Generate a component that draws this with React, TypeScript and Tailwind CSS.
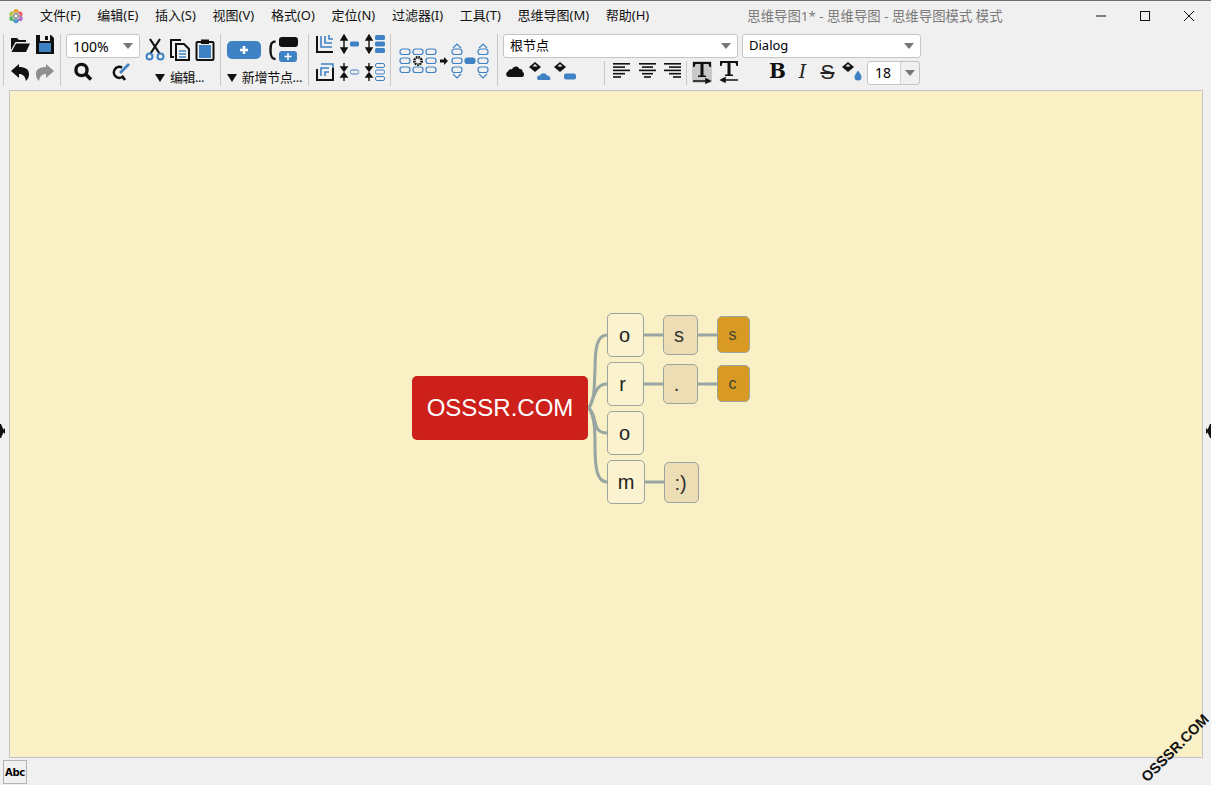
import type { ReactNode } from 'react';

const BLUE = '#3f82c4';
const UI_FONT = "font-['Noto_Sans','Noto_Sans_CJK_SC',sans-serif]";

const menus = ['文件(F)', '编辑(E)', '插入(S)', '视图(V)', '格式(O)', '定位(N)', '过滤器(I)', '工具(T)', '思维导图(M)', '帮助(H)'];

const nodes = [
  { label: 'o', box: 'left-[596px] top-[221px] w-[37px] h-[44px] bg-[#fbf3d0] text-[20px] text-[#222] pr-[2px]' },
  { label: 'r', box: 'left-[596px] top-[270px] w-[37px] h-[44px] bg-[#fbf3d0] text-[20px] text-[#222] pr-[6px]' },
  { label: 'o', box: 'left-[596px] top-[319px] w-[37px] h-[44px] bg-[#fbf3d0] text-[20px] text-[#222] pr-[2px]' },
  { label: 'm', box: 'left-[596px] top-[368px] w-[38px] h-[44px] bg-[#fbf3d0] text-[20px] text-[#222]' },
  { label: 's', box: 'left-[652px] top-[223px] w-[35px] h-[40px] bg-[#ecddb5] text-[20px] text-[#333] pr-[3px]' },
  { label: '.', box: 'left-[652px] top-[272px] w-[35px] h-[40px] bg-[#ecddb5] text-[20px] text-[#333] pr-[8px]' },
  { label: ':)', box: 'left-[653px] top-[370px] w-[35px] h-[41px] bg-[#ecddb5] text-[20px] text-[#333] pr-[2px]' },
  { label: 's', box: 'left-[706px] top-[224px] w-[33px] h-[37px] bg-[#d89a22] text-[16px] text-[#443] pr-[2px]' },
  { label: 'c', box: 'left-[706px] top-[273px] w-[33px] h-[37px] bg-[#d89a22] text-[16px] text-[#443] pr-[2px]' },
];

function Cell({ children }: { children: ReactNode }) {
  return <div className="w-[25px] h-[28px] flex items-center justify-center">{children}</div>;
}

function Sep({ className = 'mt-1 h-[52px]' }: { className?: string }) {
  return <div className={`w-px shrink-0 bg-[#c8c8c8] ${className}`} />;
}

function Ico({ children, w = 24, h = 24 }: { children: ReactNode; w?: number; h?: number }) {
  return (
    <svg width={w} height={h} viewBox={`0 0 ${w} ${h}`} className="shrink-0">
      {children}
    </svg>
  );
}

function Caret() {
  return (
    <svg width="10" height="6" viewBox="0 0 10 6">
      <path d="M0 0h10L5 6z" fill="#777" />
    </svg>
  );
}

function DownMark() {
  return (
    <svg width="10" height="8" viewBox="0 0 10 8" className="shrink-0">
      <path d="M0 0h10L5 8z" fill="#111" />
    </svg>
  );
}

function ArrowsOut() {
  return <path d="M6 6v12M3 8l3-5 3 5zM3 16l3 5 3-5z" fill="#111" stroke="#111" strokeWidth="1.400" />;
}

function ArrowsIn() {
  return <path d="M6 3v5M3 7l3 4 3-4zM6 21v-5M3 17l3-4 3 4z" fill="#111" stroke="#111" strokeWidth="1.400" />;
}

function TreeBox({ x, y, solid }: { x: number; y: number; solid?: boolean }) {
  return <rect x={x} y={y} width="10" height="5.5" rx="2.5" fill={solid ? BLUE : 'none'} stroke={BLUE} strokeWidth="1.2" />;
}

function TextAlign({ lines }: { lines: [number, number][] }) {
  return (
    <Ico>
      {lines.map(([x, w], i) => (
        <rect key={i} x={x} y={4 + i * 3.3} width={w} height="1.6" fill="#111" />
      ))}
    </Ico>
  );
}

function ComboBox({ text, className }: { text: string; className: string }) {
  return (
    <div className={`h-[24px] rounded-[3px] border border-[#c4c4c4] bg-white flex items-center justify-between pl-[6px] pr-[6px] text-black ${className}`}>
      <span>{text}</span>
      <Caret />
    </div>
  );
}

function FillIcon({ children }: { children: ReactNode }) {
  return (
    <Ico>
      <path d="M7 3l6 5-6 5-6-5z" fill="#111" />
      <path d="M4.5 7.500h5L7 5z" fill="#f0f0f0" />
      {children}
    </Ico>
  );
}

export default function App() {
  return (
    <div className={`relative w-[1211px] h-[785px] overflow-hidden flex flex-col bg-[#f0f0f0] ${UI_FONT}`}>
      {/* title bar */}
      <div className="h-[30px] shrink-0 border-t border-[#6e6e6e] pt-px flex items-center text-[13px]">
        <div className="w-[32px] flex justify-center">
          <svg width="16" height="16" viewBox="0 0 16 16">
            <circle cx="8" cy="3.6" r="2.6" fill="#e9a23b" />
            <circle cx="12" cy="6" r="2.6" fill="#e0656e" />
            <circle cx="12" cy="10.4" r="2.6" fill="#b06ac0" />
            <circle cx="8" cy="12.6" r="2.6" fill="#4f8fd0" />
            <circle cx="4" cy="10.4" r="2.6" fill="#57b46d" />
            <circle cx="4" cy="6" r="2.6" fill="#b7c24a" />
            <circle cx="8" cy="8" r="3.6" fill="#f0f0f0" />
            <circle cx="8" cy="8" r="2.4" fill="none" stroke="#555" strokeWidth="1" />
          </svg>
        </div>
        <div className="flex gap-[0.7px] text-[#111]">
          {menus.map((m) => (
            <span key={m} className="px-2 whitespace-nowrap">{m}</span>
          ))}
        </div>
        <span className="ml-[90px] text-[13.400px] text-[#7a7a7a] whitespace-nowrap">思维导图1* - 思维导图 - 思维导图模式 模式</span>
        <div className="ml-auto flex items-center h-full">
          <div className="w-[44px] flex justify-center">
            <svg width="10" height="10" viewBox="0 0 10 10"><path d="M0 5h10" stroke="#111" /></svg>
          </div>
          <div className="w-[44px] flex justify-center">
            <svg width="10" height="10" viewBox="0 0 10 10"><rect x=".5" y=".5" width="9" height="9" fill="none" stroke="#111" /></svg>
          </div>
          <div className="w-[44px] flex justify-center">
            <svg width="10" height="10" viewBox="0 0 10 10"><path d="M0 0l10 10M10 0L0 10" stroke="#111" /></svg>
          </div>
        </div>
      </div>

      {/* toolbar */}
      <div className="h-[60px] shrink-0 flex pl-[3px]">
        <Sep />
        <div className="w-[56px] pl-[3px] shrink-0">
          <div className="flex">
            <Cell>
              <Ico>
                <path d="M3 18V6h6l2 2h7v2H7.5z" fill="#111" />
                <path d="M8 11.5h14L18 20H3.5z" fill="#111" />
              </Ico>
            </Cell>
            <Cell>
              <Ico>
                <path d="M3 3h15l3 3v16H3z" fill="#111" />
                <path d="M7 3h10v6H7z" fill="#f0f0f0" />
                <path d="M12 4h3v4h-3z" fill="#111" />
                <path d="M6 11h12v9H6z" fill={BLUE} />
              </Ico>
            </Cell>
          </div>
          <div className="flex">
            <Cell>
              <Ico>
                <path d="M11 4L3 11l8 7v-4c4 0 6 2 7 7 2-2 3-4 3-7 0-5-4-7-10-7z" fill="#111" />
              </Ico>
            </Cell>
            <Cell>
              <Ico>
                <path d="M13 4l8 7-8 7v-4c-4 0-6 2-7 7-2-2-3-4-3-7 0-5 4-7 10-7z" fill="#8f8f8f" />
              </Ico>
            </Cell>
          </div>
        </div>
        <Sep />
        <div className="w-[81px] shrink-0 pt-[4px] text-[14px]">
          <ComboBox text="100%" className="ml-[5px] w-[74px]" />
          <div className="flex h-[27px] items-center pl-[9px] gap-[13px]">
            <Cell>
              <Ico>
                <circle cx="10.5" cy="10" r="5.6" fill="none" stroke="#111" strokeWidth="3.4" />
                <path d="M14.5 14l5.5 5.5" stroke="#111" strokeWidth="3.6" />
              </Ico>
            </Cell>
            <Cell>
              <Ico>
                <path d="M13 7.5a5.5 5.5 0 1 0 1.5 8.5" fill="none" stroke="#111" strokeWidth="2.6" />
                <path d="M13 16l3 4" stroke="#111" strokeWidth="2.6" />
                <path d="M11 13l9-9" stroke={BLUE} strokeWidth="2.6" />
              </Ico>
            </Cell>
          </div>
        </div>
        <div className="w-[78px] shrink-0">
          <div className="flex h-[34px] items-end">
            <Cell>
              <Ico>
                <path d="M7 1l9.5 14.5M17 1L7.500 15.500" stroke="#111" strokeWidth="2.2" fill="none" />
                <circle cx="6.500" cy="18.500" r="3" fill="none" stroke={BLUE} strokeWidth="2" />
                <circle cx="17.500" cy="18.500" r="3" fill="none" stroke={BLUE} strokeWidth="2" />
              </Ico>
            </Cell>
            <Cell>
              <Ico>
                <path d="M13 2H3v17h3" fill="none" stroke="#111" strokeWidth="2" />
                <path d="M8 6h8l5 5v11H8z" fill="none" stroke="#111" strokeWidth="2" />
                <path d="M11 13h7M11 16h7M11 19h7" stroke={BLUE} strokeWidth="1.500" />
              </Ico>
            </Cell>
            <Cell>
              <Ico>
                <rect x="3.500" y="4" width="17" height="18" rx="1" fill="none" stroke="#111" strokeWidth="2" />
                <path d="M8 1.500h8V6H8z" fill="#111" />
                <rect x="6" y="7" width="12" height="13" fill={BLUE} />
              </Ico>
            </Cell>
          </div>
          <div className="mt-[6px] h-[16px] flex items-center justify-center gap-[5px] text-[13px] tracking-[-0.5px] text-[#111] pr-[3px]">
            <DownMark />
            <span>编辑...</span>
          </div>
        </div>
        <Sep />
        <div className="w-[87px] shrink-0">
          <div className="flex h-[29px] items-end pl-[6px] gap-[8px]">
            <svg width="34" height="18" viewBox="0 0 34 18">
              <rect width="34" height="18" rx="5" fill={BLUE} />
              <path d="M17 5v8M13 9h8" stroke="#fff" strokeWidth="2.500" />
            </svg>
            <svg width="30" height="26" viewBox="0 0 30 26" className="mb-[-4px]">
              <path d="M6.500 4.500C2.500 4.500 1.500 7 1.500 13S2.500 22 6.500 22" fill="none" stroke="#111" strokeWidth="2.400" />
              <rect x="10" y="0" width="19" height="10" rx="3" fill="#111" />
              <rect x="10" y="14" width="18" height="11" rx="3" fill={BLUE} />
              <path d="M19 16v7M15.500 19.500h7" stroke="#fff" strokeWidth="1.500" />
            </svg>
          </div>
          <div className="mt-[11px] h-[16px] flex items-center justify-center gap-[5px] text-[13px] tracking-[-0.3px] text-[#111] whitespace-nowrap">
            <DownMark />
            <span>新增节点...</span>
          </div>
        </div>
        <Sep />
        <div className="w-[81px] shrink-0 pl-[3px]">
          <div className="flex">
            <Cell>
              <Ico>
                <path d="M4 4v16h16" fill="none" stroke="#111" strokeWidth="2" />
                <path d="M8 4v11h11M12 4v7h7" fill="none" stroke={BLUE} strokeWidth="1.600" />
                <path d="M16 3v4h4" fill="none" stroke={BLUE} strokeWidth="1.600" />
              </Ico>
            </Cell>
            <Cell>
              <Ico>
                <ArrowsOut />
                <rect x="12" y="9.500" width="9" height="5" rx="1.500" fill={BLUE} />
              </Ico>
            </Cell>
            <Cell>
              <Ico>
                <ArrowsOut />
                <rect x="12" y="3" width="10" height="5" rx="1.500" fill={BLUE} />
                <rect x="12" y="9.500" width="10" height="5" rx="1.500" fill={BLUE} />
                <rect x="12" y="16" width="10" height="5" rx="1.500" fill={BLUE} />
              </Ico>
            </Cell>
          </div>
          <div className="flex">
            <Cell>
              <Ico>
                <path d="M4 9v11h16V8" fill="none" stroke="#111" strokeWidth="2" />
                <path d="M8 16V8h8M12 16v-4h4" fill="none" stroke={BLUE} strokeWidth="1.600" />
                <path d="M8 4h12v4" fill="none" stroke={BLUE} strokeWidth="1.600" />
              </Ico>
            </Cell>
            <Cell>
              <Ico>
                <ArrowsIn />
                <rect x="12.500" y="10" width="8" height="4" rx="1.500" fill="none" stroke={BLUE} />
              </Ico>
            </Cell>
            <Cell>
              <Ico>
                <ArrowsIn />
                <rect x="12.500" y="3.500" width="9" height="4" rx="1.500" fill="none" stroke={BLUE} />
                <rect x="12.500" y="10" width="9" height="4" rx="1.500" fill="none" stroke={BLUE} />
                <rect x="12.500" y="16.500" width="9" height="4" rx="1.500" fill="none" stroke={BLUE} />
              </Ico>
            </Cell>
          </div>
        </div>
        <Sep />
        <div className="w-[106px] shrink-0 pt-[13px] pl-[8px]">
          <svg width="92" height="36" viewBox="0 0 92 36">
            <TreeBox x={1} y={6} /><TreeBox x={14} y={6} /><TreeBox x={27} y={6} />
            <TreeBox x={1} y={15} /><TreeBox x={27} y={15} />
            <TreeBox x={1} y={24} /><TreeBox x={14} y={24} /><TreeBox x={27} y={24} />
            <circle cx="19" cy="18" r="3.600" fill="none" stroke="#111" strokeWidth="2.400" strokeDasharray="1.600 .8" />
            <circle cx="19" cy="18" r="4.400" fill="none" stroke="#111" strokeWidth="1" strokeDasharray="1.500 1.500" />
            <path d="M41 16.500h4V14l4 4-4 4v-2.500h-4z" fill="#111" />
            <TreeBox x={53} y={6} /><TreeBox x={53} y={15} /><TreeBox x={53} y={24} />
            <TreeBox x={66} y={15} solid />
            <TreeBox x={79} y={6} /><TreeBox x={79} y={15} /><TreeBox x={79} y={24} />
            <path d="M54 5l4-4 4 4M80 5l4-4 4 4M54 31l4 4 4-4M80 31l4 4 4-4" fill="none" stroke={BLUE} strokeWidth="1.200" />
          </svg>
        </div>
        <Sep />
        <div className="pt-[4px] pl-[5px] w-[424px] shrink-0 text-[13px]">
          <div className="flex gap-[4px]">
            <ComboBox text="根节点" className="w-[235px]" />
            <ComboBox text="Dialog" className="w-[179px]" />
          </div>
          <div className="flex ml-[-1px] mt-[-1px] items-center">
            <Cell>
              <svg width="18" height="12" viewBox="0 0 18 12" className="shrink-0">
                <path d="M3 12C0 12-1 8 2 6.500 3 4 5 4 6 4.500 7 1 12 0 13.500 4c2-.5 3 1 3 2.500 2 1 2 5.500-.5 5.500z" fill="#111" />
              </svg>
            </Cell>
            <Cell>
              <FillIcon>
                <path d="M10 21c-2-2-.5-5 2-4.500 1-3 6-3 7 0 3 0 4 3 3 4.500z" fill={BLUE} />
              </FillIcon>
            </Cell>
            <Cell>
              <FillIcon>
                <rect x="11" y="14.500" width="12" height="6" rx="2" fill={BLUE} />
              </FillIcon>
            </Cell>
            <div className="w-[27px]" />
            <Sep className="h-[24px] mt-[3px]" />
            <div className="w-[5px]" />
            <Cell><TextAlign lines={[[2, 17], [2, 12], [2, 17], [2, 12], [2, 8]]} /></Cell>
            <Cell><TextAlign lines={[[3, 17], [6, 11], [3, 17], [6, 11], [8, 7]]} /></Cell>
            <Cell><TextAlign lines={[[3, 17], [8, 12], [3, 17], [8, 12], [12, 8]]} /></Cell>
            <div className="w-px" />
            <Sep className="h-[24px] mt-[3px]" />
            <div className="w-[5px]" />
            <div className="w-[20px] h-[22px] mt-[1px] bg-[#c9c9c9] rounded-[2px] flex items-center justify-center">
              <svg width="20" height="24" viewBox="0 0 20 24" className="shrink-0">
                <path d="M1 2h18v5h-1.500l-1-3H11.500v11.500H14V17H6v-1.500h2.500V4H3.500l-1 3H1z" fill="#111" />
                <path d="M1 21h15M14 19l4 2-4 2z" fill="#111" stroke="#111" strokeWidth="1.500" />
              </svg>
            </div>
            <div className="w-[4px]" />
            <Cell>
              <svg width="20" height="24" viewBox="0 0 20 24" className="shrink-0">
                <path d="M1 2h18v5h-1.500l-1-3H11.500v11.500H14V17H6v-1.500h2.500V4H3.500l-1 3H1z" fill="#111" />
                <path d="M19 21H4M6 19l-4 2 4 2z" fill="#111" stroke="#111" strokeWidth="1.500" />
              </svg>
            </Cell>
            <div className="w-[24px]" />
            <Cell><span className="font-['DejaVu_Serif',serif] font-bold text-[20px] leading-none text-[#111]">B</span></Cell>
            <Cell><span className="font-['DejaVu_Serif',serif] italic text-[19px] leading-none text-[#222]">I</span></Cell>
            <Cell><span className="font-['Liberation_Sans',sans-serif] line-through text-[21px] leading-none text-[#222]">S</span></Cell>
            <Cell>
              <FillIcon>
                <path d="M17 11.500c2 3 3.500 4.500 3.500 6.500a3.500 3.500 0 0 1-7 0c0-2 1.500-3.500 3.500-6.500z" fill={BLUE} />
              </FillIcon>
            </Cell>
            <div className="ml-[2px] mt-[4px] w-[53px] h-[24px] rounded-[3px] border border-[#c4c4c4] flex text-[14px] text-black">
              <span className="w-[32px] bg-white rounded-l-[3px] pl-[7px] leading-[22px]">18</span>
              <span className="flex-1 border-l border-[#d0d0d0] flex items-center justify-center"><Caret /></span>
            </div>
          </div>
        </div>
      </div>

      {/* canvas with side arrows */}
      <div className="flex-1 flex pr-[8px] pl-[9px] relative">
        <svg width="6" height="18" viewBox="0 0 6 18" className="absolute left-0 top-[332px]">
          <path d="M1 2l3 7-3 7 -1 0V2zM2 9l3-3v6z" fill="#111" />
        </svg>
        <svg width="6" height="18" viewBox="0 0 6 18" className="absolute right-0 top-[332px]">
          <path d="M5 2L2 9l3 7h1V2zM4 9L1 6v6z" fill="#111" />
        </svg>
        <div className="relative flex-1 border border-[#c4c4c4] bg-[#faf0c5]">
          <div className="absolute left-px top-px">
            <svg width="1190" height="664" viewBox="0 0 1190 664" className="absolute left-0 top-0">
              <g fill="none" stroke="#98a5a2" strokeWidth="3" strokeLinecap="round">
                <path d="M578 316C584 306 583 296 584 278 584 256 586 243 596 243" />
                <path d="M578 316C584 304 584 292 596 292" />
                <path d="M578 316C587 324 580 341 596 341" />
                <path d="M578 316C584 326 584 340 584 354 584 376 586 390 596 390" />
                <path d="M633 243H652M687 243H706M633 292H652M687 292H706M634 390H653" />
              </g>
            </svg>
            <div className="absolute left-[401px] top-[284px] w-[176px] h-[64px] rounded-[5px] bg-[#cd201a] flex items-center justify-center font-['Liberation_Sans',sans-serif] text-[24px] text-white">
              OSSSR.COM
            </div>
            {nodes.map((n, i) => (
              <div key={i} className={`absolute rounded-[5px] border border-[#9aa5a0] flex items-center justify-center font-['Liberation_Sans',sans-serif] ${n.box}`}>
                {n.label}
              </div>
            ))}
          </div>
        </div>
      </div>

      {/* status bar */}
      <div className="h-[27px] shrink-0 pl-[3px] pt-[2px]">
        <div className="w-[24px] h-[24px] border border-[#b4b4b4] bg-[#f0f0f0] flex items-center justify-center font-['DejaVu_Sans',sans-serif] font-bold text-[10px] tracking-[-0.3px] text-black">
          Abc
        </div>
      </div>

      {/* watermark */}
      <div className="absolute left-[1129px] top-[738px] w-[92px] text-center -rotate-45 font-['Liberation_Sans',sans-serif] font-bold text-[14.500px] leading-[20px] text-[#111] whitespace-nowrap">
        OSSSR.COM
      </div>
    </div>
  );
}
